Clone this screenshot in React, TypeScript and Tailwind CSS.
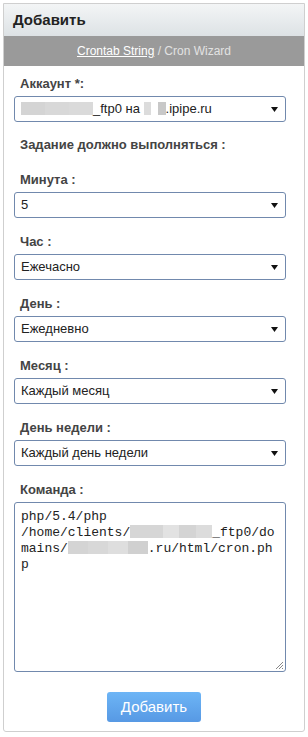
import React from "react";

const font = { fontFamily: '"Liberation Sans", Arial, sans-serif' };

function Blur({ w, shades }: { w: number; shades?: string[] }) {
  const parts = shades ?? ["#d6d6d6"];
  return (
    <span className="inline-flex h-[13px] align-[-2px]" style={{ width: w }}>
      {parts.map((c, i) => (
        <span key={i} className="flex-1 h-full" style={{ background: c }} />
      ))}
    </span>
  );
}

function Arrow() {
  return (
    <svg width="7" height="5" viewBox="0 0 7 5" className="absolute right-[7px] top-[10px]">
      <path d="M0 0 H7 L3.5 5 Z" fill="#111" />
    </svg>
  );
}

function Select({ children }: { children: React.ReactNode }) {
  return (
    <div className="relative h-[26px] w-[272px] rounded-[3px] border border-[#7189ad] bg-white pl-[6px] text-[13px] leading-[24px] text-[#222] whitespace-nowrap">
      {children}
      <Arrow />
    </div>
  );
}

function Field({ label, children }: { label: string; children: React.ReactNode }) {
  return (
    <div className="mt-[16px]">
      <div className="pl-[6px] text-[13px] leading-[15px] font-bold text-[#444] mb-[5px]">{label}</div>
      {children}
    </div>
  );
}

export default function App() {
  return (
    <div className="w-[308px] h-[737px] bg-white pt-[3px] pl-[3px]" style={font}>
      <div className="w-[302px] border border-[#cfcfcf] rounded-b-[3px] bg-white">
        <div className="h-[32px] bg-gradient-to-b from-[#f3f5f6] to-[#dde2e5] pl-[9px] text-[15px] leading-[32px] font-bold text-[#222]">
          Добавить
        </div>
        <div className="h-[30px] bg-[#9a9a9a] text-center text-[12px] leading-[30px] text-[#e2e2e2]">
          <span className="underline text-white">Crontab String</span> / Cron Wizard
        </div>

        <div className="pl-[10px] pt-[10px] pb-[9px]">
          <div className="pl-[6px] text-[13px] leading-[15px] font-bold text-[#444] mb-[5px]">Аккаунт *:</div>
          <Select>
            <Blur w={72} shades={["#d4d4d4", "#d8d8d8", "#dadada"]} />
            _ftp0 на <Blur w={22} shades={["#dcdcdc", "#ffffff", "#c8c8c8"]} />.ipipe.ru
          </Select>

          <div className="mt-[15px] pl-[6px] text-[13px] leading-[15px] font-bold text-[#444]">
            Задание должно выполняться :
          </div>

          <div className="mt-[20px]">
            <div className="pl-[6px] text-[13px] leading-[15px] font-bold text-[#444] mb-[5px]">Минута :</div>
            <Select>5</Select>
          </div>
          <Field label="Час :">
            <Select>Ежечасно</Select>
          </Field>
          <Field label="День :">
            <Select>Ежедневно</Select>
          </Field>
          <Field label="Месяц :">
            <Select>Каждый месяц</Select>
          </Field>
          <Field label="День недели :">
            <Select>Каждый день недели</Select>
          </Field>
          <Field label="Команда :">
            <div
              className="relative h-[170px] w-[272px] rounded-[3px] border border-[#7189ad] bg-white pl-[6px] pt-[6px] text-[13px] leading-[16px] text-[#222] whitespace-pre"
              style={{ fontFamily: '"Liberation Mono", "Courier New", monospace' }}
            >
              <div>php/5.4/php</div>
              <div>
                /home/clients/
                <Blur w={82} shades={["#d6d6d6", "#d6d6d6", "#e2e2e2", "#d4d4d4", "#dcdcdc"]} />
                _ftp0/do
              </div>
              <div>
                mains/
                <Blur w={80} shades={["#d4d4d4", "#d8d8d8", "#dedede", "#d0d0d0"]} />
                .ru/html/cron.ph
              </div>
              <div>p</div>
              <svg width="9" height="9" viewBox="0 0 9 9" className="absolute right-[1px] bottom-[1px]">
                <path d="M8 1 L1 8 M8 4 L4 8 M8 7 L7 8" stroke="#888" strokeWidth="1" />
              </svg>
            </div>
          </Field>

          <div className="mt-[20px] flex justify-center pr-[10px]">
            <button className="h-[30px] w-[94px] rounded-[3px] bg-gradient-to-b from-[#6db5f6] to-[#5799e4] text-[15px] text-white">
              Добавить
            </button>
          </div>
        </div>
      </div>
    </div>
  );
}
